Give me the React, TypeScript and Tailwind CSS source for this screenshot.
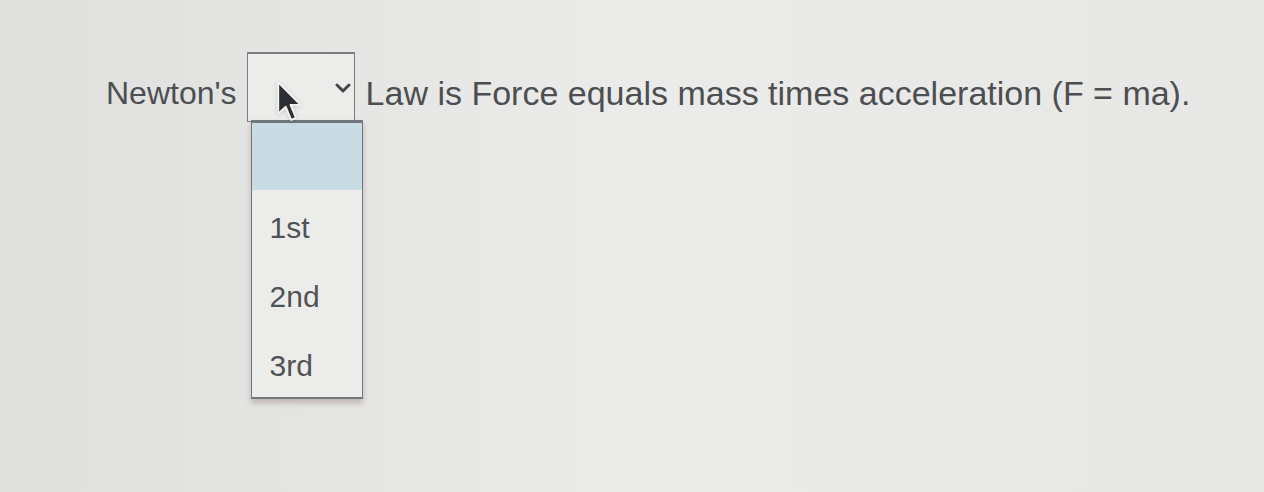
import React from 'react';

const options = ['1st', '2nd', '3rd'];

const Chevron: React.FC = () => (
  <svg width="16" height="10" viewBox="0 0 16 10" fill="none">
    <path d="M2 2 L8 8 L14 2" stroke="#44474a" strokeWidth="3" strokeLinecap="round" strokeLinejoin="round" />
  </svg>
);

const Cursor: React.FC = () => (
  <svg width="25" height="42" viewBox="0 0 12 20" className="drop-shadow-sm">
    <path
      d="M0.6 0.6 L0.6 15.6 L4.2 12.3 L6.8 18.6 L9.1 17.6 L6.5 11.4 L11.3 11.4 Z"
      fill="#2b2f33"
      stroke="#f4f4f4"
      strokeWidth="0.9"
      strokeLinejoin="round"
    />
  </svg>
);

export default function App() {
  return (
    <div className="h-[492px] w-full overflow-hidden bg-gradient-to-r from-[#dfe0dd] via-[#ebebea] to-[#e7e7e5] font-['Liberation_Sans',Arial,sans-serif] text-[#4c4f52]">
      <div className="flex items-start pl-[106px] pt-[52px] text-[32px] leading-none">
        <span className="mt-[25px] whitespace-nowrap">Newton's</span>

        {/* open select */}
        <div className="relative ml-[10px] mr-[11px]">
          <div className="flex h-[70px] w-[108px] items-start justify-end border border-t-2 border-[#7a7e82] bg-[#ececea] pr-[3px] pt-[29px]">
            <Chevron />
          </div>

          <div className="absolute left-[4px] top-[68px] z-10 w-[112px] border-x border-b-2 border-t-[3px] border-[#72777b] bg-[#ececea] shadow-[0_4px_6px_rgba(120,90,90,0.35)]">
            <div className="h-[67px] bg-[#c9dce3]" />
            {options.map((o) => (
              <div key={o} className="flex h-[69px] items-center pl-[18px] pt-[6px] text-[30px] text-[#505356]">
                {o}
              </div>
            ))}
          </div>

          <div className="absolute left-[30px] top-[29px] z-20">
            <Cursor />
          </div>
        </div>

        <span className="mt-[24px] whitespace-nowrap text-[34px]">
          Law is Force equals mass times acceleration (F = ma).
        </span>
      </div>
    </div>
  );
}
